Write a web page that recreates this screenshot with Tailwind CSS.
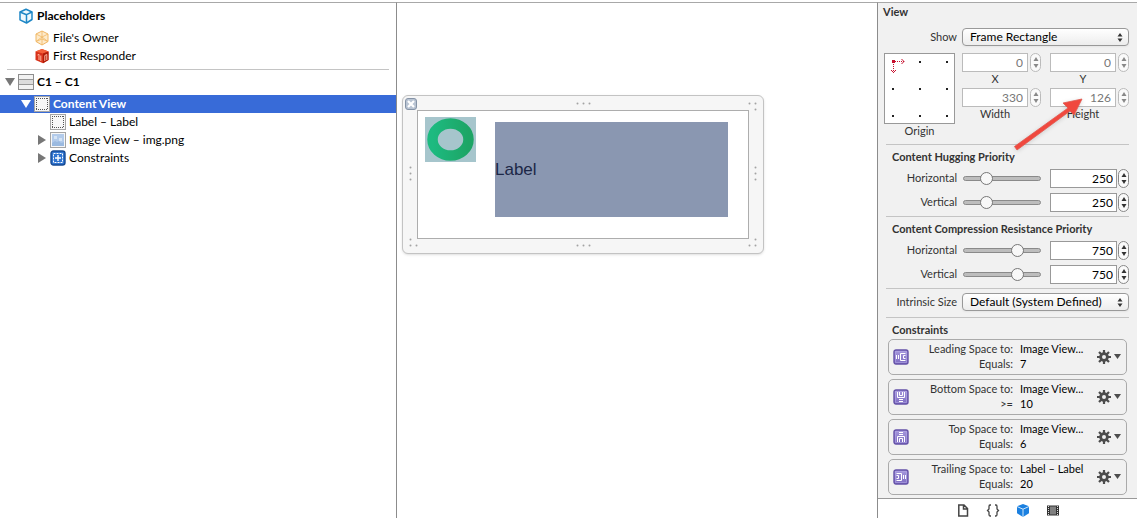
<!doctype html>
<html lang="en">

<head>
    <meta charset="utf-8">
    <meta name="viewport" content="width=device-width, initial-scale=1.0">
    <title>C1 - Size Inspector</title>
    <script src="https://cdn.jsdelivr.net/npm/@tailwindcss/browser@4"></script>
</head>

<body class="flex min-h-screen border-t border-white bg-white font-[Lato,'Noto_Sans',sans-serif] text-[12px] leading-[18px] text-black">

    <!-- Shared icons -->
    <svg class="absolute size-0" aria-hidden="true">
        <linearGradient id="purple" x2="0" y2="1">
            <stop stop-color="#a79add" />
            <stop offset="1" stop-color="#7d6bc2" />
        </linearGradient>
        <symbol id="icon-view" viewBox="0 0 16 16">
            <rect x="0.5" y="0.5" width="15" height="15" fill="#f7f7f7" stroke="#a5a5a5" />
            <path d="M2 2.5h12M2 13.5h12M2.5 2v12M13.5 2v12" fill="none" stroke="#555" stroke-dasharray="1 1" shape-rendering="crispEdges" />
        </symbol>
        <symbol id="icon-stepper-up" viewBox="0 0 6 4"><path d="M3 0L5.5 4H.5z" fill="currentColor" /></symbol>
        <symbol id="icon-stepper-down" viewBox="0 0 6 4"><path d="M3 4L5.5 0H.5z" fill="currentColor" /></symbol>
        <symbol id="icon-popup" viewBox="0 0 6 9"><path d="M3 0L5.5 3.5H.5zM3 9L.5 5.5h5z" fill="#333" /></symbol>
        <symbol id="icon-gear" viewBox="0 0 14 14">
            <path d="M7 0v14M0 7h14M2 2l10 10M12 2L2 12" stroke="#4d4d4d" stroke-width="2.2" />
            <circle cx="7" cy="7" r="3.4" fill="#f1f1f1" stroke="#4d4d4d" stroke-width="2.8" />
        </symbol>
        <symbol id="icon-constraint" viewBox="0 0 16 16">
            <rect x="1" y="1" width="14" height="14" rx="2" fill="url(#purple)" stroke="#6451a8" stroke-width="1.4" />
            <path d="M2.5 13.5v-11h11v11z" fill="none" stroke="#b3a6e4" stroke-opacity=".6" />
        </symbol>
        <symbol id="icon-leading" viewBox="0 0 16 16"><path d="M3.5 6v4M5.5 6v4M12.5 4.5h-5v7h5M12.5 6.5h-2v3h2" fill="none" stroke="#fff" /></symbol>
        <symbol id="icon-bottom" viewBox="0 0 16 16"><path d="M4.5 3v5.5h7V3M6.5 3v3.5h3V3M6 10.5h4M6 12.5h4" fill="none" stroke="#fff" /></symbol>
        <symbol id="icon-top" viewBox="0 0 16 16"><path d="M4.5 13V7.5h7V13M6.5 13V9.5h3V13M6 3.5h4M6 5.5h4" fill="none" stroke="#fff" /></symbol>
        <symbol id="icon-trailing" viewBox="0 0 16 16"><path d="M3.5 4.5h5v7h-5M3.5 6.5h2v3h-2M10.5 6v4M12.5 6v4" fill="none" stroke="#fff" /></symbol>
    </svg>

    <!-- Document outline -->
    <nav class="mt-px w-[397px] shrink-0 border-t border-r border-[#a8a8a8] border-r-[#8c8c8c]" aria-label="Document outline">
        <ul>
            <li class="flex h-[26px] items-center gap-[3px] pl-[18px] font-bold">
                <svg class="size-4" viewBox="0 0 16 16" fill="#eef8fd" stroke="#1e87c6" stroke-width="1.5" stroke-linejoin="round">
                    <path d="M8 1.2L14 4v7.5L8.5 15 2 11.8V4z" />
                    <path d="M2 4l6.5 2.7L14 4M8.5 6.7V15" fill="none" />
                </svg>
                Placeholders
            </li>
            <li class="flex h-[18px] items-center gap-[3px] pl-[34px]">
                <svg class="size-4" viewBox="0 0 16 16" fill="#fdeacb" stroke="#f0b765" stroke-linejoin="round">
                    <path d="M8 1l6 3v7.5L8 15l-6-3.5V4z" />
                    <path d="M2 4l6 3 6-3M8 1v14M2 11.5L8 7l6 4.5M2 11.5L8 9l6 2.5" fill="none" stroke-width=".8" />
                </svg>
                File's Owner
            </li>
            <li class="flex h-[18px] items-center gap-[3px] pl-[34px]">
                <svg class="size-4" viewBox="0 0 16 16">
                    <path d="M8 1l6.5 2.5V12L9 15.3 1.5 12V3.5z" fill="#d8321a" />
                    <path d="M8 1l6.5 2.5L9 5.5 1.5 3.5z" fill="#f4603a" />
                    <path d="M9 5.5l5.5-2V12L9 15.3z" fill="#b01d08" />
                    <path d="M3.5 7l1.5-.7V12M6.8 7.5V13M10.8 13V7.5l2-1V12" fill="none" stroke="#ffb8a0" />
                </svg>
                First Responder
            </li>
        </ul>
        <hr class="mx-[7px] mt-1 -mb-px border-[#c4c4c4]">
        <ul>
            <li class="flex h-[26px] items-center gap-[3px] pl-[5px] font-bold">
                <svg class="size-[10px]" viewBox="0 0 10 10"><path d="M0 1h10L5 9z" fill="#777" /></svg>
                <svg class="size-4" viewBox="0 0 16 16">
                    <rect x="0.5" y="0.5" width="15" height="15" fill="#f2f2f2" stroke="#8e8e8e" />
                    <path d="M1 6h14v4H1z" fill="#dcdcdc" />
                    <path d="M1 5.5h14M1 10.5h14" stroke="#999" />
                </svg>
                C1 – C1
            </li>
            <li class="flex h-[18px] items-center gap-[3px] bg-[#386bd8] pl-[21px] font-bold text-white" aria-current="true">
                <svg class="size-[10px]" viewBox="0 0 10 10"><path d="M0 1h10L5 9z" fill="#fff" /></svg>
                <svg class="size-4"><use href="#icon-view" /></svg>
                Content View
            </li>
            <li class="flex h-[18px] items-center gap-[3px] pl-[50px]">
                <svg class="size-4"><use href="#icon-view" /></svg>
                Label – Label
            </li>
            <li class="flex h-[18px] items-center gap-[3px] pl-[37px]">
                <svg class="size-[10px]" viewBox="0 0 10 10"><path d="M1 0v10l8-5z" fill="#777" /></svg>
                <svg class="size-4" viewBox="0 0 16 16">
                    <rect x="0.5" y="0.5" width="15" height="15" fill="#f7f7f7" stroke="#a5a5a5" />
                    <rect x="2" y="2" width="12" height="12" fill="#b3cbea" />
                    <path d="M2 14v-3l3-2 2 1 2-1 2 2 3-1v4z" fill="#9bbae0" />
                    <path d="M4 4h3v3H4zM9 6h3v3H9z" fill="#d5e4f5" />
                </svg>
                Image View – img.png
            </li>
            <li class="flex h-[18px] items-center gap-[3px] pl-[37px]">
                <svg class="size-[10px]" viewBox="0 0 10 10"><path d="M1 0v10l8-5z" fill="#777" /></svg>
                <svg class="size-4" viewBox="0 0 16 16">
                    <rect x="1" y="1" width="14" height="14" rx="2.5" fill="#2f74d0" stroke="#164a94" stroke-width="1.4" />
                    <path d="M3.5 3.5h9v9h-9z" fill="none" stroke="#fff" stroke-dasharray="2 1" />
                    <path d="M8 5v6M5 8h6" stroke="#fff" stroke-width="1.4" />
                </svg>
                Constraints
            </li>
        </ul>
    </nav>

    <!-- Canvas -->
    <main class="mt-px min-w-0 flex-1 border-t border-[#a8a8a8] pt-[92px] pl-[5px]">
        <div class="relative w-[362px] rounded-md border border-[#c3c3c3] bg-[#f6f6f6] p-[14px] shadow-sm">
            <button class="absolute top-[2px] left-[2px] size-3 rounded-[3px] border border-[#8593a6] bg-[#b9c4d3]" aria-label="Close">
                <svg class="size-full" viewBox="0 0 10 10"><path d="M2 2l6 6M8 2L2 8" stroke="#fff" stroke-width="2.2" /></svg>
            </button>
            <svg class="pointer-events-none absolute -top-px -left-px" width="362" height="159" fill="none" stroke="#a3a3a3" stroke-width="2" stroke-linecap="round">
                <path d="M175.5 8.5h0M181.5 8.5h0M187.5 8.5h0M175.5 150.5h0M181.5 150.5h0M187.5 150.5h0" />
                <path d="M8.5 72.5h0M8.5 78.5h0M8.5 84.5h0M353.5 72.5h0M353.5 78.5h0M353.5 84.5h0" />
                <path d="M347.5 8.5h0M353.5 8.5h0M353.5 14.5h0M8.5 144.5h0M8.5 150.5h0M14.5 150.5h0M347.5 150.5h0M353.5 150.5h0M353.5 144.5h0" />
            </svg>
            <div class="flex h-[129px] items-start border border-[#adadad] bg-white pt-[6px] pr-5 pl-[7px]">
                <svg class="h-[45px] w-[51px] bg-[#a6c5cc]" viewBox="0 0 51 45">
                    <linearGradient id="ring"><stop stop-color="#1dba80" /><stop offset="1" stop-color="#1da565" /></linearGradient>
                    <ellipse cx="25.5" cy="22.5" rx="18" ry="16" fill="none" stroke="url(#ring)" stroke-width="10.5" />
                </svg>
                <div class="mt-[5px] ml-[19px] flex h-[95px] flex-1 items-center bg-[#8a97b1] font-['Liberation_Sans',sans-serif] text-[17px] text-[#1c2747]">Label</div>
            </div>
        </div>
    </main>

    <!-- Size inspector -->
    <aside class="relative mt-px flex w-[260px] shrink-0 flex-col border-t border-l border-[#a8a8a8] border-l-[#8c8c8c] bg-[#f1f1f1] text-[11px] text-[#333]">
        <h2 class="pl-[5px] font-bold">View</h2>

        <div class="mt-[7px] flex h-[18px] items-center pr-2">
            <label for="show" class="w-[79px] text-right">Show</label>
            <div class="relative ml-[5px] flex-1">
                <select id="show" class="block h-[18px] w-full appearance-none rounded border border-[#999] bg-gradient-to-b from-white to-[#ededed] pl-[7px] text-[12px] leading-4 text-black shadow-xs">
                    <option>Frame Rectangle</option>
                </select>
                <svg class="pointer-events-none absolute top-[5px] right-[6px] h-[9px] w-[6px]"><use href="#icon-popup" /></svg>
            </div>
        </div>

        <div class="mt-[7px] flex items-start justify-between pr-2 pb-1 pl-[6px]">
            <div class="text-center leading-[14px]">
                <svg class="size-[71px] border border-[#999] bg-white" viewBox="0 0 69 69" fill="#222">
                    <path d="M34 7h2v2h-2zM61 7h2v2h-2zM7 34h2v2H7zM34 34h2v2h-2zM61 34h2v2h-2zM7 61h2v2H7zM34 61h2v2h-2zM61 61h2v2h-2z" />
                    <path d="M8 7.5h11M8.5 8v11" fill="none" stroke="#c8102e" stroke-dasharray="1 1" shape-rendering="crispEdges" />
                    <path d="M16.5 5l2.5 2.5-2.5 2.5M6 16l2.500 2.500L11 16" fill="none" stroke="#c8102e" />
                    <path d="M7 6h3v3H7z" fill="#c8102e" />
                </svg>
                Origin
            </div>
            <div id="frame-fields" class="grid w-[167px] grid-cols-2 gap-x-[9px]"></div>
        </div>

        <div id="priorities"></div>

        <div class="mx-2 mt-[2px] border-t border-[#c4c4c4]"></div>
        <div class="mt-1 flex h-[18px] items-center pr-2">
            <label for="intrinsic" class="w-[79px] text-right">Intrinsic Size</label>
            <div class="relative ml-[5px] flex-1">
                <select id="intrinsic" class="block h-[18px] w-full appearance-none rounded border border-[#999] bg-gradient-to-b from-white to-[#ededed] pl-[7px] text-[12px] leading-4 text-black shadow-xs">
                    <option>Default (System Defined)</option>
                </select>
                <svg class="pointer-events-none absolute top-[5px] right-[6px] h-[9px] w-[6px]"><use href="#icon-popup" /></svg>
            </div>
        </div>
        <div class="mx-2 mt-[6px] border-t border-[#c4c4c4]"></div>

        <h3 class="mt-[3px] pl-[14px] font-bold">Constraints</h3>
        <ul id="constraints" class="flex flex-col gap-1 px-[10px] pb-[3px]"></ul>

        <div class="mt-auto flex h-[20px] items-center justify-center gap-4 border-t border-[#999] bg-white pt-1">
            <button aria-label="File templates">
                <svg class="h-[13px] w-[14px]" viewBox="0 0 14 13" fill="none" stroke="#444" stroke-width="1.5"><path d="M2.8 1H8l3.5 3.5V12H2.8zM7.500 1v4h4" /></svg>
            </button>
            <button aria-label="Code snippets">
                <svg class="h-[13px] w-[14px]" viewBox="0 0 14 13" fill="none" stroke="#444" stroke-width="1.3"><path d="M5 1H4Q3 1 3 2.5V5L1.5 6.5 3 8v2.5Q3 12 4 12h1M9 1h1q1 0 1 1.5V5l1.5 1.5L11 8v2.5q0 1.5-1 1.5H9" /></svg>
            </button>
            <button aria-label="Objects">
                <svg class="h-[13px] w-[14px]" viewBox="0 0 14 13">
                    <path d="M7 0l6 2.3v7L7 13 1 9.3v-7z" fill="#1b80e0" />
                    <path d="M1 2.5l6 2.7 6-2.7M7 5.2V13" fill="none" stroke="#cfe6fb" />
                </svg>
            </button>
            <button aria-label="Media">
                <svg class="h-[13px] w-[14px]" viewBox="0 0 14 13">
                    <path d="M1 1.5h12v10H1z" fill="#333" />
                    <path d="M4 2.5h6v8H4z" fill="#808080" />
                    <path d="M2.5 2v9M11.5 2v9" stroke="#ddd" stroke-dasharray="1 1" />
                </svg>
            </button>
        </div>

        <!-- Callout arrow over the height field -->
        <svg class="pointer-events-none absolute top-[90px] left-[132px] drop-shadow-sm" width="80" height="60" viewBox="0 0 80 60" aria-hidden="true">
            <path d="M4.500 53.500L58 15l-5-5 19-4-8 16-4-4L7 57z" fill="#f0483e" stroke="#e0584f" stroke-width=".8" />
        </svg>
    </aside>

    <script>
        const frameFields = [
            { label: 'X', value: 0 },
            { label: 'Y', value: 0 },
            { label: 'Width', value: 330 },
            { label: 'Height', value: 126 },
        ];

        const priorities = [
            { title: 'Content Hugging Priority', id: 'hugging', value: 250 },
            { title: 'Content Compression Resistance Priority', id: 'compression', value: 750 },
        ];

        const constraints = [
            { icon: 'leading', name: 'Leading Space to:', target: 'Image View...', relation: 'Equals:', value: 7 },
            { icon: 'bottom', name: 'Bottom Space to:', target: 'Image View...', relation: '&gt;=', value: 10 },
            { icon: 'top', name: 'Top Space to:', target: 'Image View...', relation: 'Equals:', value: 6 },
            { icon: 'trailing', name: 'Trailing Space to:', target: 'Label – Label', relation: 'Equals:', value: 20 },
        ];

        // Up/down buttons beside a number field
        function stepper(name, disabled = false) {
            const off = disabled ? 'disabled' : '';
            return `
                <span class="flex h-[19px] w-[11px] shrink-0 flex-col items-center justify-evenly rounded-full border bg-[#fafafa] ${disabled ? 'border-[#bbb] text-[#888]' : 'border-[#888] text-[#333]'}">
                    <button class="block" aria-label="Increase ${name}" ${off}><svg class="h-[4px] w-[6px]"><use href="#icon-stepper-up" /></svg></button>
                    <button class="block" aria-label="Decrease ${name}" ${off}><svg class="h-[4px] w-[6px]"><use href="#icon-stepper-down" /></svg></button>
                </span>`;
        }

        document.getElementById('frame-fields').innerHTML = frameFields.map(f => `
            <div class="h-[35px]">
                <div class="flex justify-between">
                    <input id="frame-${f.label}" class="h-[19px] w-[66px] border border-[#bbb] bg-white px-1 text-right text-[12px] text-[#777]" value="${f.value}" disabled>
                    ${stepper(f.label, true)}
                </div>
                <label for="frame-${f.label}" class="block w-[66px] text-center leading-[13px]">${f.label}</label>
            </div>`).join('');

        document.getElementById('priorities').innerHTML = priorities.map(p => `
            <section>
                <div class="mx-2 mt-[2px] border-t border-[#c4c4c4]"></div>
                <h3 class="mt-[3px] pl-[14px] font-bold">${p.title}</h3>
                ${['Horizontal', 'Vertical'].map(axis => `
                    <div class="flex h-6 items-center pr-2">
                        <label for="${p.id}-${axis}" class="w-[79px] text-right">${axis}</label>
                        <input id="${p.id}-${axis}" type="range" min="0" max="1000" value="${p.value}" class="mr-[9px] ml-[6px] h-[14px] w-[78px] appearance-none bg-transparent [&::-webkit-slider-runnable-track]:h-[5px] [&::-webkit-slider-runnable-track]:rounded-full [&::-webkit-slider-runnable-track]:border [&::-webkit-slider-runnable-track]:border-[#8a8a8a] [&::-webkit-slider-runnable-track]:bg-[#bdbdbd] [&::-webkit-slider-thumb]:mt-[-5px] [&::-webkit-slider-thumb]:size-[13px] [&::-webkit-slider-thumb]:appearance-none [&::-webkit-slider-thumb]:rounded-full [&::-webkit-slider-thumb]:border [&::-webkit-slider-thumb]:border-[#777] [&::-webkit-slider-thumb]:bg-[#f8f8f8]">
                        <input class="mr-[1px] h-[19px] min-w-0 flex-1 border border-[#999] bg-white px-[3px] text-right text-[12px] text-black" value="${p.value}" aria-label="${p.title} ${axis}">
                        ${stepper(axis)}
                    </div>`).join('')}
            </section>`).join('');

        document.getElementById('constraints').innerHTML = constraints.map(c => `
            <li class="flex h-9 items-center rounded-[5px] border border-[#aaa] pr-[5px] pl-1">
                <svg class="size-4 shrink-0" viewBox="0 0 16 16"><use href="#icon-constraint" /><use href="#icon-${c.icon}" /></svg>
                <div class="grid flex-1 grid-cols-[104px_1fr] gap-x-[7px] pb-[2px] leading-[15px]">
                    <span class="text-right">${c.name}</span><span class="whitespace-nowrap text-black">${c.target}</span>
                    <span class="text-right">${c.relation}</span><span class="text-black">${c.value}</span>
                </div>
                <button class="flex shrink-0 items-center gap-[3px]" aria-label="Edit constraint">
                    <svg class="size-[14px]"><use href="#icon-gear" /></svg>
                    <svg class="h-[6px] w-[7px]" viewBox="0 0 7 6"><path d="M0 0h7L3.5 5z" fill="#4d4d4d" /></svg>
                </button>
            </li>`).join('');
    </script>
</body>

</html>
